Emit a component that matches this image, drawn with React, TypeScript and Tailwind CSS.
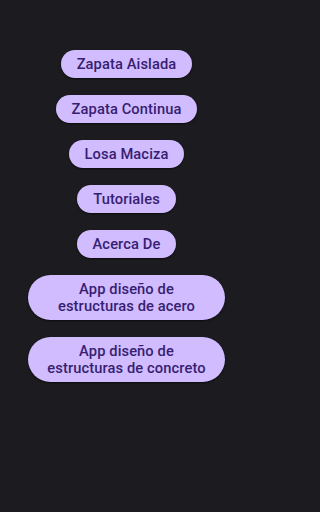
const items = [
  "Zapata Aislada",
  "Zapata Continua",
  "Losa Maciza",
  "Tutoriales",
  "Acerca De",
  "App diseño de estructuras de acero",
  "App diseño de estructuras de concreto",
];

export default function App() {
  return (
    <div
      className="min-h-screen w-full bg-[#1c1b1f]"
      style={{ fontFamily: "Roboto, 'Noto Sans', sans-serif" }}
    >
      <div className="w-[253px] min-h-[512px] flex flex-col items-center gap-[17px] pt-[50px] px-2">
        {items.map((label) => (
          <button
            key={label}
            className="max-w-[197px] rounded-full bg-[#d0bcff] px-4 py-[5.5px] text-center text-[14.7px] leading-[17px] font-medium tracking-[0.1px] text-[#381e72] shadow-[0_1px_2px_rgba(0,0,0,0.6)]"
          >
            {label}
          </button>
        ))}
      </div>
    </div>
  );
}
